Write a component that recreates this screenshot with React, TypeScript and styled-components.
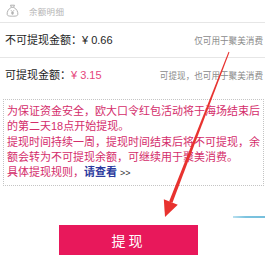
import React from "react";
import styled, { createGlobalStyle } from "styled-components";

const Global = createGlobalStyle`
  html, body { margin: 0; padding: 0; background: #ffffff; }
  body { font-family: "Liberation Sans", "Noto Sans CJK SC", sans-serif; }
  * { box-sizing: border-box; }
`;

const Page = styled.div`
  position: relative;
  width: 265px;
  height: 255px;
  overflow: hidden;
  background: #ffffff;
`;

const Header = styled.div`
  height: 23px;
  display: flex;
  align-items: center;
  gap: 10px;
  padding: 0 0 1px 6px;
  border-bottom: 1px solid #e6e6e6;
`;

const HeaderLabel = styled.span`
  font-size: 8.5px;
  color: #b4b4b4;
  letter-spacing: 0.3px;
`;

const Row = styled.div<{ $divider?: boolean }>`
  height: ${(p) => (p.$divider ? 35 : 34)}px;
  display: flex;
  align-items: baseline;
  justify-content: space-between;
  padding: 11px 2px 0 5px;
  border-bottom: ${(p) => (p.$divider ? "1px solid #e6e6e6" : "none")};
`;

const Label = styled.span`
  font-size: 11px;
  line-height: 13px;
  color: #1e1e1e;
  white-space: nowrap;
`;

const Amount = styled.span<{ $accent?: boolean }>`
  color: ${(p) => (p.$accent ? "#e6457c" : "#1e1e1e")};
`;

const Hint = styled.span`
  font-size: 8.6px;
  color: #8a8a8a;
  white-space: nowrap;
`;

const Notice = styled.div`
  margin: 7px 1px 0 3px;
  border: 1px dotted #c4c4c4;
  padding: 4px 2px 4px 3px;
`;

const NoticeLine = styled.div`
  font-size: 11px;
  line-height: 15.25px;
  color: #d42d6b;
  white-space: nowrap;
`;

const Link = styled.span`
  color: #2b3a9e;
  font-weight: bold;
`;

const More = styled.span`
  color: #333;
  font-size: 9px;
`;

const ButtonWrap = styled.div`
  padding: 39px 0 0 59px;
`;

const Button = styled.button`
  width: 139px;
  height: 34px;
  border: none;
  border-radius: 0;
  background: #e8185b;
  color: #ffffff;
  font-family: "Liberation Sans", "Noto Sans CJK SC", sans-serif;
  font-size: 14px;
  letter-spacing: 3px;
  padding: 0 0 4px 0;
  display: flex;
  align-items: center;
  justify-content: center;
`;

const Arrow = styled.svg`
  position: absolute;
  left: 0;
  top: 0;
  pointer-events: none;
`;

const BlueStroke = styled.div`
  position: absolute;
  left: 233px;
  top: 216px;
  width: 32px;
  height: 2px;
  background: linear-gradient(90deg, #b9e0ef 0%, #7cc3df 40%, #76bfdc 100%);
`;

const BagIcon = () => (
  <svg width="13" height="13" viewBox="0 0 13 13" fill="none" stroke="#a8a8a8" strokeWidth="0.9">
    <path d="M4.5 1.2 H8.5 L7.6 3.3 H5.4 Z" />
    <path d="M5.4 3.3 C2.2 5 0.8 8 1.2 10.5 C1.4 11.8 2.6 12.2 6.5 12.2 C10.4 12.2 11.6 11.8 11.8 10.5 C12.2 8 10.8 5 7.6 3.3" />
    <path d="M4.8 6 L6.5 8 L8.2 6 M6.5 8 V10.8 M5 8.6 H8 M5 9.7 H8" strokeWidth="0.7" />
  </svg>
);

export default function App() {
  // arrow geometry
  const top = { x: 229, y: 52 };
  const tip = { x: 165, y: 217 };
  const dx = tip.x - top.x;
  const dy = tip.y - top.y;
  const len = Math.hypot(dx, dy);
  const ux = dx / len;
  const uy = dy / len;
  const px = -uy;
  const py = ux;
  const headLen = 16;
  const headHalf = 7.5;
  const base = { x: tip.x - ux * headLen, y: tip.y - uy * headLen };
  const shaft = [
    [top.x + px * 0.5, top.y + py * 0.5],
    [top.x - px * 0.5, top.y - py * 0.5],
    [base.x - px * 1.8, base.y - py * 1.8],
    [base.x + px * 1.8, base.y + py * 1.8],
  ]
    .map((p) => p.join(","))
    .join(" ");
  const head = [
    [tip.x, tip.y],
    [base.x + px * headHalf, base.y + py * headHalf],
    [base.x - px * headHalf, base.y - py * headHalf],
  ]
    .map((p) => p.join(","))
    .join(" ");

  return (
    <Page>
      <Global />
      <Header>
        <BagIcon />
        <HeaderLabel>余额明细</HeaderLabel>
      </Header>
      <Row $divider>
        <Label>
          不可提现金额：<Amount>¥ 0.66</Amount>
        </Label>
        <Hint>仅可用于聚美消费</Hint>
      </Row>
      <Row>
        <Label>
          可提现金额：<Amount $accent>¥ 3.15</Amount>
        </Label>
        <Hint>可提现，也可用于聚美消费</Hint>
      </Row>
      <Notice>
        <NoticeLine>为保证资金安全，欧大口令红包活动将于海场结束后</NoticeLine>
        <NoticeLine>的第二天18点开始提现。</NoticeLine>
        <NoticeLine>提现时间持续一周，提现时间结束后将不可提现，余</NoticeLine>
        <NoticeLine>额会转为不可提现余额，可继续用于聚美消费。</NoticeLine>
        <NoticeLine>
          具体提现规则，<Link>请查看</Link> <More>&gt;&gt;</More>
        </NoticeLine>
      </Notice>
      <ButtonWrap>
        <Button>提现</Button>
      </ButtonWrap>
      <BlueStroke />
      <Arrow width="265" height="255" viewBox="0 0 265 255">
        <polygon points={shaft} fill="#e8322f" />
        <polygon points={head} fill="#e8322f" />
      </Arrow>
    </Page>
  );
}
